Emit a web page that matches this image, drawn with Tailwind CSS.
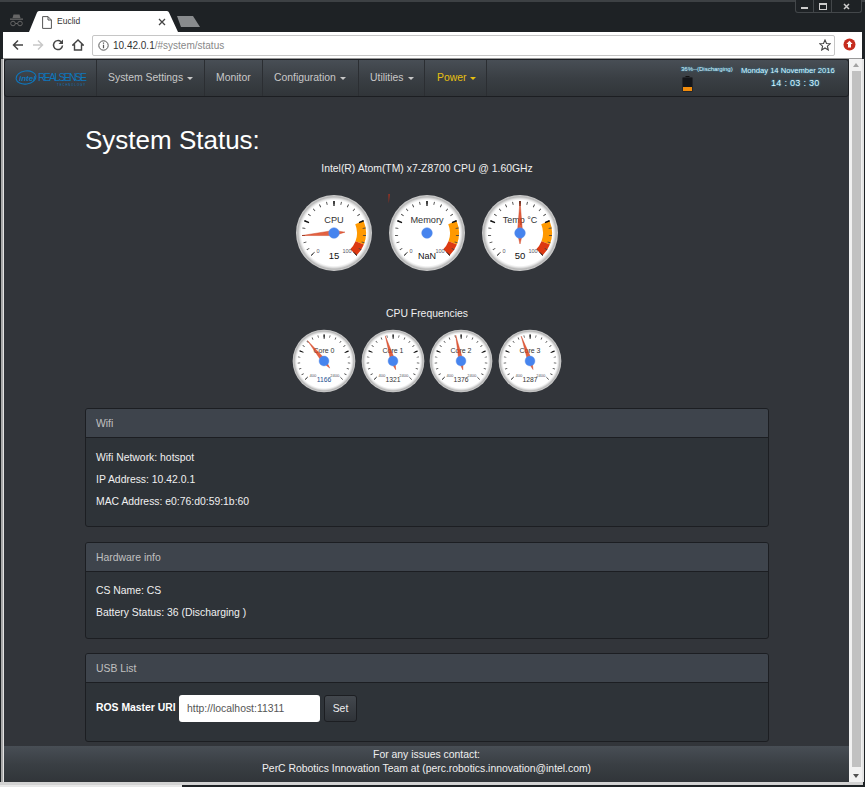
<!DOCTYPE html>
<html lang="en">
<head>
<meta charset="utf-8">
<title>Euclid</title>
<script src="https://cdn.jsdelivr.net/npm/@tailwindcss/browser@4"></script>
</head>
<body class="m-0 overflow-hidden bg-[#1e2225] font-['Liberation_Sans',Arial,sans-serif]">
<svg class="absolute w-0 h-0" aria-hidden="true">
  <defs>
    <radialGradient id="bezel" cx="0.5" cy="0.5" r="0.5">
      <stop offset="0" stop-color="#ffffff"/>
      <stop offset="0.86" stop-color="#ffffff"/>
      <stop offset="0.9" stop-color="#e8e8e8"/>
      <stop offset="0.95" stop-color="#b8b8b8"/>
      <stop offset="1" stop-color="#d0d0d0"/>
    </radialGradient>
    <symbol id="dial" viewBox="-40 -40 80 80" overflow="visible">
      <circle r="38" fill="url(#bezel)"/>
    </symbol>
    <symbol id="ticks" viewBox="-40 -40 80 80" overflow="visible">
      <path d="M-21.57 21.57A30.5 30.5 0 1 1 21.57 21.57" pathLength="270" fill="none" stroke="#444" stroke-width="3" stroke-dasharray="1.6 11.9" stroke-dashoffset="0.8"/>
      <path d="M-20.860 20.860A29.500 29.500 0 1 1 20.860 20.860" pathLength="270" fill="none" stroke="#111" stroke-width="5" stroke-dasharray="2.6 64.9" stroke-dashoffset="1.3"/>
    </symbol>
    <symbol id="band" viewBox="-40 -40 80 80" overflow="visible">
      <path d="M25.4 -10.5A27.5 27.5 0 0 1 25.7 9.9" fill="none" stroke="#ff9900" stroke-width="9"/>
      <path d="M25.7 9.9A27.5 27.5 0 0 1 19.4 19.4" fill="none" stroke="#dc3912" stroke-width="9"/>
    </symbol>
    <symbol id="needle" viewBox="-40 -40 80 80" overflow="visible">
      <polygon points="0,-32 2.600,0 0,11 -2.600,0" fill="#dc3912" fill-opacity="0.8" stroke="#c63310" stroke-width="0.4"/>
    </symbol>
  </defs>
</svg>

<div class="relative flex h-[787px] w-[865px] flex-col overflow-hidden">
  <!-- tab strip -->
  <div class="relative h-[32px] shrink-0 bg-[#1e2225]">
    <div class="absolute inset-x-0 top-0 h-[2px] bg-[#3d4144]"></div>
    <svg class="absolute left-[9px] top-[13px]" width="15" height="15" viewBox="0 0 15 15">
      <path d="M3.5 5 4.5 1.5h6L11.500 5z" fill="#666"/>
      <rect x="1" y="5.500" width="13" height="1.300" fill="#666"/>
      <circle cx="4" cy="10.500" r="2.300" fill="none" stroke="#666" stroke-width="1"/>
      <circle cx="11" cy="10.500" r="2.300" fill="none" stroke="#666" stroke-width="1"/>
      <path d="M6.300 10.500h2.400" stroke="#666"/>
    </svg>
    <svg class="absolute left-[28px] top-[11px]" width="152" height="21" viewBox="0 0 152 21">
      <path d="M1 21 9 1.500Q9.500 0 11 0H139Q140.500 0 141 1.500L150 21z" fill="#ffffff"/>
    </svg>
    <svg class="absolute left-[176px] top-[15px]" width="26" height="13" viewBox="0 0 26 13">
      <path d="M1 1H17L24 12H5z" fill="#888b8d"/>
    </svg>
    <svg class="absolute left-[42px] top-[16px]" width="10" height="13" viewBox="0 0 10 13">
      <path d="M.6.6H6L9.400 4V12.400H.6zM6 .6V4H9.400" fill="#fff" stroke="#555" stroke-width="1"/>
    </svg>
    <span class="absolute left-[57px] top-[15px] text-[8.500px] leading-[13px] text-[#333]">Euclid</span>
    <svg class="absolute left-[158px] top-[18px]" width="8" height="8" viewBox="0 0 8 8">
      <path d="M1 1 7 7M7 1 1 7" stroke="#444" stroke-width="1.300"/>
    </svg>
    <!-- window controls -->
    <div class="absolute right-[3px] top-0 flex h-[13px] w-[67px] rounded-b-[3px] border border-t-0 border-[#43474a] bg-[#1e2225]">
      <div class="flex w-[18px] items-end justify-center border-r border-[#43474a] pb-[3px]"><div class="h-[2px] w-[7px] bg-[#ccc]"></div></div>
      <div class="flex w-[18px] items-center justify-center border-r border-[#43474a]"><div class="h-[7px] w-[8px] border border-t-2 border-[#ccc]"></div></div>
      <div class="flex flex-1 items-center justify-center"><svg width="7" height="7" viewBox="0 0 7 7"><path d="M1 1 6 6M6 1 1 6" stroke="#ccc" stroke-width="1.500"/></svg></div>
    </div>
  </div>

  <!-- toolbar -->
  <div class="relative mx-[3px] flex h-[27px] shrink-0 items-center border-b border-[#999] bg-white pr-[27px]">
    <div class="flex w-[86px] shrink-0 items-center justify-between pl-[9px] pr-[5px]">
      <svg width="12" height="12" viewBox="0 0 12 12"><path d="M11 6H2M6 1.500 1.500 6 6 10.500" fill="none" stroke="#444" stroke-width="1.500"/></svg>
      <svg width="12" height="12" viewBox="0 0 12 12"><path d="M1 6H10M6 1.500 10.500 6 6 10.500" fill="none" stroke="#c8c8c8" stroke-width="1.500"/></svg>
      <svg width="12" height="12" viewBox="0 0 12 12"><path d="M10.500 6.500A4.500 4.500 0 1 1 9 2.700" fill="none" stroke="#444" stroke-width="1.500"/><path d="M11 .5V5H6.500z" fill="#444"/></svg>
      <svg width="12" height="12" viewBox="0 0 12 12"><path d="M6 1 .8 6H2.500V11H9.500V6H11.200z" fill="none" stroke="#444" stroke-width="1.400"/></svg>
    </div>
    <div class="ml-[3px] flex h-[21px] flex-1 items-center rounded-[2px] border border-[#c6c6c6] pl-[5px] pr-[3px]">
      <svg class="shrink-0" width="11" height="11" viewBox="0 0 11 11"><circle cx="5.500" cy="5.500" r="4.700" fill="none" stroke="#555"/><path d="M5.500 4.800V8.200M5.500 2.500V3.800" stroke="#555" stroke-width="1.200"/></svg>
      <span class="ml-[4px] text-[10px] leading-[13px] text-[#333]">10.42.0.1<span class="text-[#888]">/#system/status</span></span>
      <svg class="ml-auto shrink-0" width="12" height="12" viewBox="0 0 12 12"><path d="M6 1 7.500 4.500 11.200 4.800 8.400 7.200 9.300 11 6 9 2.700 11 3.600 7.200.8 4.800 4.500 4.500z" fill="none" stroke="#444" stroke-width="1.100"/></svg>
    </div>
    <svg class="absolute right-[6px] top-[6px]" width="13" height="13" viewBox="0 0 13 13"><circle cx="6.500" cy="6.500" r="6" fill="#c62d1f"/><path d="M6.500 2.800 9.600 6H8V9.600H5V6H3.400z" fill="#fff"/></svg>
  </div>

  <!-- viewport -->
  <div class="flex flex-1 min-h-0 pl-[1px]">
    <div class="w-[3px] shrink-0 border-l-2 border-[#a9a9a9] bg-[#e4e4e4]"></div>
    <main class="flex w-[845px] shrink-0 flex-col bg-[#32353a]">
      <!-- navbar -->
      <nav class="flex h-[38px] shrink-0 items-stretch rounded-[3px] border border-[#1c1e22] bg-linear-to-b from-[#484e55] via-[#3a3f44] to-[#313539] text-[10.400px] text-[#c8c8c8]">
        <div class="flex w-[92px] shrink-0 items-center border-r border-[#2b2e32] pl-[10px]">
          <svg width="74" height="20" viewBox="0 0 74 20" class="overflow-visible">
            <ellipse cx="11" cy="9.500" rx="10" ry="6.500" fill="none" stroke="#0f76bb" stroke-width="1.100" transform="rotate(-8 11 9.500)"/>
            <text x="4" y="12.500" font-size="8" font-style="italic" font-weight="700" fill="#0f76bb">intel</text>
            <text x="23" y="13" font-size="10.500" textLength="49" fill="#0f76bb">REALSENSE</text>
            <text x="42" y="17.500" font-size="2.800" textLength="28" fill="#0f76bb">TECHNOLOGY</text>
          </svg>
        </div>
        <div class="flex w-[108px] shrink-0 items-center gap-[4px] border-r border-[#2b2e32] pl-[11px] whitespace-nowrap">System Settings <span class="mt-[1px] h-0 w-0 border-x-[3px] border-t-[3px] border-x-transparent border-t-[#c8c8c8]"></span></div>
        <div class="flex w-[58px] shrink-0 items-center border-r border-[#2b2e32] pl-[11px]">Monitor</div>
        <div class="flex w-[96px] shrink-0 items-center gap-[4px] border-r border-[#2b2e32] pl-[11px]">Configuration <span class="mt-[1px] h-0 w-0 border-x-[3px] border-t-[3px] border-x-transparent border-t-[#c8c8c8]"></span></div>
        <div class="flex w-[66px] shrink-0 items-center gap-[4px] border-r border-[#2b2e32] pl-[11px]">Utilities <span class="mt-[1px] h-0 w-0 border-x-[3px] border-t-[3px] border-x-transparent border-t-[#c8c8c8]"></span></div>
        <div class="flex w-[62px] shrink-0 items-center gap-[4px] border-r border-[#2b2e32] pl-[12px] text-[#e8c010]">Power <span class="mt-[1px] h-0 w-0 border-x-[3px] border-t-[3px] border-x-transparent border-t-[#e8c010]"></span></div>
        <div class="ml-[194px] flex w-[60px] shrink-0 flex-col pt-[5px]">
          <span class="text-[6px] leading-[8px] text-[#d8f4ff] [text-shadow:0_0_2px_#29a9e0]">36%--(Discharging)</span>
          <svg class="mt-[3px] ml-[1px]" width="11" height="16" viewBox="0 0 11 16"><path d="M3.500 0H7.500V2H3.500z" fill="#111"/><rect x=".5" y="1.500" width="10" height="14" rx="1" fill="#14161a" stroke="#24262a"/><rect x="1" y="11" width="9" height="4" fill="#f18c0c"/></svg>
        </div>
        <div class="flex w-[100px] shrink-0 flex-col items-start pt-[6px] text-[#d8f4ff] [text-shadow:0_0_2px_#29a9e0]">
          <span class="text-[7.600px] leading-[10px] whitespace-nowrap">Monday 14 November 2016</span>
          <span class="ml-[30px] mt-[2px] text-[9px] leading-[11px] tracking-[0.3px] whitespace-pre">14 : 03 : 30</span>
        </div>
      </nav>

      <section class="ml-[81px] mr-[80px] flex flex-1 flex-col text-[10.400px] leading-[16px] text-[#f0f0f0]">
        <h1 class="mt-[28px] h-[30px] text-[26px] leading-[30px] text-white">System Status:</h1>
        <p class="mt-[6px] text-center">Intel(R) Atom(TM) x7-Z8700 CPU @ 1.60GHz</p>

        <div class="mt-[16px] flex justify-center gap-[13px]">
          <svg width="80" height="80" viewBox="-40 -40 80 80" class="overflow-visible font-['Liberation_Sans']">
            <use href="#dial" x="-40" y="-40" width="80" height="80"/><use href="#band" x="-40" y="-40" width="80" height="80"/><use href="#ticks" x="-40" y="-40" width="80" height="80"/>
            <text y="-10.500" text-anchor="middle" font-size="9.200" fill="#333">CPU</text>
            <text x="-16" y="19.500" text-anchor="middle" font-size="5.500" fill="#556">0</text>
            <text x="13" y="19.500" text-anchor="middle" font-size="5.500" fill="#556">100</text>
            <text y="26" text-anchor="middle" font-size="9.500" fill="#111">15</text>
            <use href="#needle" x="-40" y="-40" width="80" height="80" transform="rotate(-94.5)"/>
            <circle r="5.300" fill="#4684ee" stroke="#5a8fe8" stroke-width="0.500"/>
          </svg>
          <svg width="80" height="80" viewBox="-40 -40 80 80" class="overflow-visible font-['Liberation_Sans']">
            <polygon points="-38.500,-39 -37.300,-39 -38.200,-29.500" fill="#c0301a"/>
            <use href="#dial" x="-40" y="-40" width="80" height="80"/><use href="#band" x="-40" y="-40" width="80" height="80"/><use href="#ticks" x="-40" y="-40" width="80" height="80"/>
            <text y="-10.500" text-anchor="middle" font-size="9.200" fill="#333">Memory</text>
            <text x="-16" y="19.500" text-anchor="middle" font-size="5.500" fill="#556">0</text>
            <text x="13" y="19.500" text-anchor="middle" font-size="5.500" fill="#556">100</text>
            <text y="26" text-anchor="middle" font-size="9" fill="#111">NaN</text>
            <circle r="5.300" fill="#4684ee" stroke="#5a8fe8" stroke-width="0.500"/>
          </svg>
          <svg width="80" height="80" viewBox="-40 -40 80 80" class="overflow-visible font-['Liberation_Sans']">
            <use href="#dial" x="-40" y="-40" width="80" height="80"/><use href="#band" x="-40" y="-40" width="80" height="80"/><use href="#ticks" x="-40" y="-40" width="80" height="80"/>
            <text y="-10.500" text-anchor="middle" font-size="9" fill="#333">Temp °C</text>
            <text x="-16" y="19.500" text-anchor="middle" font-size="5.500" fill="#556">0</text>
            <text x="13" y="19.500" text-anchor="middle" font-size="5.500" fill="#556">100</text>
            <text y="26" text-anchor="middle" font-size="9.500" fill="#111">50</text>
            <use href="#needle" x="-40" y="-40" width="80" height="80"/>
            <circle r="5.300" fill="#4684ee" stroke="#5a8fe8" stroke-width="0.500"/>
          </svg>
        </div>

        <p class="mt-[33px] text-center">CPU Frequencies</p>

        <div class="mt-[6px] flex justify-center gap-[2.500px]">
          <svg width="66" height="66" viewBox="-40 -40 80 80" class="overflow-visible font-['Liberation_Sans']">
            <use href="#dial" x="-40" y="-40" width="80" height="80"/><use href="#ticks" x="-40" y="-40" width="80" height="80"/>
            <text y="-10" text-anchor="middle" font-size="8.500" fill="#333">Core 0</text>
            <text x="-13.500" y="19" text-anchor="middle" font-size="5" fill="#556">400</text>
            <text x="13" y="19" text-anchor="middle" font-size="5" fill="#556">2400</text>
            <text y="26" text-anchor="middle" font-size="8.200" fill="#1d4f8f">1166</text>
            <use href="#needle" x="-40" y="-40" width="80" height="80" transform="rotate(-39)"/>
            <circle r="6" fill="#4684ee" stroke="#5a8fe8" stroke-width="0.500"/>
          </svg>
          <svg width="66" height="66" viewBox="-40 -40 80 80" class="overflow-visible font-['Liberation_Sans']">
            <use href="#dial" x="-40" y="-40" width="80" height="80"/><use href="#ticks" x="-40" y="-40" width="80" height="80"/>
            <text y="-10" text-anchor="middle" font-size="8.500" fill="#333">Core 1</text>
            <text x="-13.500" y="19" text-anchor="middle" font-size="5" fill="#556">400</text>
            <text x="13" y="19" text-anchor="middle" font-size="5" fill="#556">2400</text>
            <text y="26" text-anchor="middle" font-size="8.200" fill="#333">1321</text>
            <use href="#needle" x="-40" y="-40" width="80" height="80" transform="rotate(-17)"/>
            <circle r="6" fill="#4684ee" stroke="#5a8fe8" stroke-width="0.500"/>
          </svg>
          <svg width="66" height="66" viewBox="-40 -40 80 80" class="overflow-visible font-['Liberation_Sans']">
            <use href="#dial" x="-40" y="-40" width="80" height="80"/><use href="#ticks" x="-40" y="-40" width="80" height="80"/>
            <text y="-10" text-anchor="middle" font-size="8.500" fill="#333">Core 2</text>
            <text x="-13.500" y="19" text-anchor="middle" font-size="5" fill="#556">400</text>
            <text x="13" y="19" text-anchor="middle" font-size="5" fill="#556">2400</text>
            <text y="26" text-anchor="middle" font-size="8.200" fill="#333">1376</text>
            <use href="#needle" x="-40" y="-40" width="80" height="80" transform="rotate(-11.600)"/>
            <circle r="6" fill="#4684ee" stroke="#5a8fe8" stroke-width="0.500"/>
          </svg>
          <svg width="66" height="66" viewBox="-40 -40 80 80" class="overflow-visible font-['Liberation_Sans']">
            <use href="#dial" x="-40" y="-40" width="80" height="80"/><use href="#ticks" x="-40" y="-40" width="80" height="80"/>
            <text y="-10" text-anchor="middle" font-size="8.500" fill="#333">Core 3</text>
            <text x="-13.500" y="19" text-anchor="middle" font-size="5" fill="#556">400</text>
            <text x="13" y="19" text-anchor="middle" font-size="5" fill="#556">2400</text>
            <text y="26" text-anchor="middle" font-size="8.200" fill="#333">1287</text>
            <use href="#needle" x="-40" y="-40" width="80" height="80" transform="rotate(-19.500)"/>
            <circle r="6" fill="#4684ee" stroke="#5a8fe8" stroke-width="0.500"/>
          </svg>
        </div>

        <div class="mt-[14px] overflow-hidden rounded-[3px] border border-[#1c1e22] bg-[#2e3338]">
          <div class="flex h-[29px] items-center border-b border-[#1c1e22] bg-[#3e444c] px-[10px] pt-[2px] text-[#c0c0c0]">Wifi</div>
          <div class="flex flex-col px-[10px] pt-[9px] pb-[13px] leading-[22px]">
            <span>Wifi Network: hotspot</span>
            <span>IP Address: 10.42.0.1</span>
            <span>MAC Address: e0:76:d0:59:1b:60</span>
          </div>
        </div>

        <div class="mt-[15px] overflow-hidden rounded-[3px] border border-[#1c1e22] bg-[#2e3338]">
          <div class="flex h-[29px] items-center border-b border-[#1c1e22] bg-[#3e444c] px-[10px] pt-[2px] text-[#c0c0c0]">Hardware info</div>
          <div class="flex flex-col px-[10px] pt-[8px] pb-[14px] leading-[22px]">
            <span>CS Name: CS</span>
            <span>Battery Status: 36 (Discharging )</span>
          </div>
        </div>

        <div class="mt-[14px] overflow-hidden rounded-[3px] border border-[#1c1e22] bg-[#2e3338]">
          <div class="flex h-[29px] items-center border-b border-[#1c1e22] bg-[#3e444c] px-[10px] pt-[2px] text-[#c0c0c0]">USB List</div>
          <div class="flex h-[58px] items-start px-[10px] pt-[12px]">
            <span class="mt-[5px] w-[83px] shrink-0 font-bold whitespace-nowrap text-white">ROS Master URI</span>
            <div class="flex h-[27px] w-[141px] items-center rounded-[3px] bg-white px-[8px] text-[#555]">http://localhost:11311</div>
            <div class="ml-[4px] flex h-[27px] w-[33px] items-center justify-center rounded-[3px] border border-[#1c1e22] bg-linear-to-b from-[#43484e] to-[#2f3338] text-[#eee]">Set</div>
          </div>
        </div>
      </section>

      <footer class="flex h-[36px] shrink-0 flex-col items-center bg-linear-to-b from-[#484e55] via-[#3a3f44] to-[#313539] pt-[2px] text-[10.400px] leading-[14px] text-[#f0f0f0]">
        <span>For any issues contact:</span>
        <span>PerC Robotics Innovation Team at (perc.robotics.innovation@intel.com)</span>
      </footer>
    </main>

    <!-- scrollbar -->
    <div class="flex w-[13px] shrink-0 flex-col items-center bg-[#f1f1f1]">
      <div class="flex h-[12px] w-full items-center justify-center"><span class="h-0 w-0 border-x-[3px] border-b-[4px] border-x-transparent border-b-[#a3a3a3]"></span></div>
      <div class="ml-[1px] h-[696px] w-[9px] bg-[#c1c1c1]"></div>
      <div class="mt-auto flex h-[13px] w-full items-center justify-center"><span class="h-0 w-0 border-x-[3px] border-t-[4px] border-x-transparent border-t-[#505050]"></span></div>
    </div>
    <div class="w-[2px] shrink-0 bg-[#e4e4e4]"></div>
  </div>
  <div class="h-[3px] w-[863px] shrink-0 bg-[#d2d2d2]"></div>
  <div class="h-[2px] w-[182px] shrink-0 bg-[#e8e8e8]"></div>
</div>
</body>
</html>
